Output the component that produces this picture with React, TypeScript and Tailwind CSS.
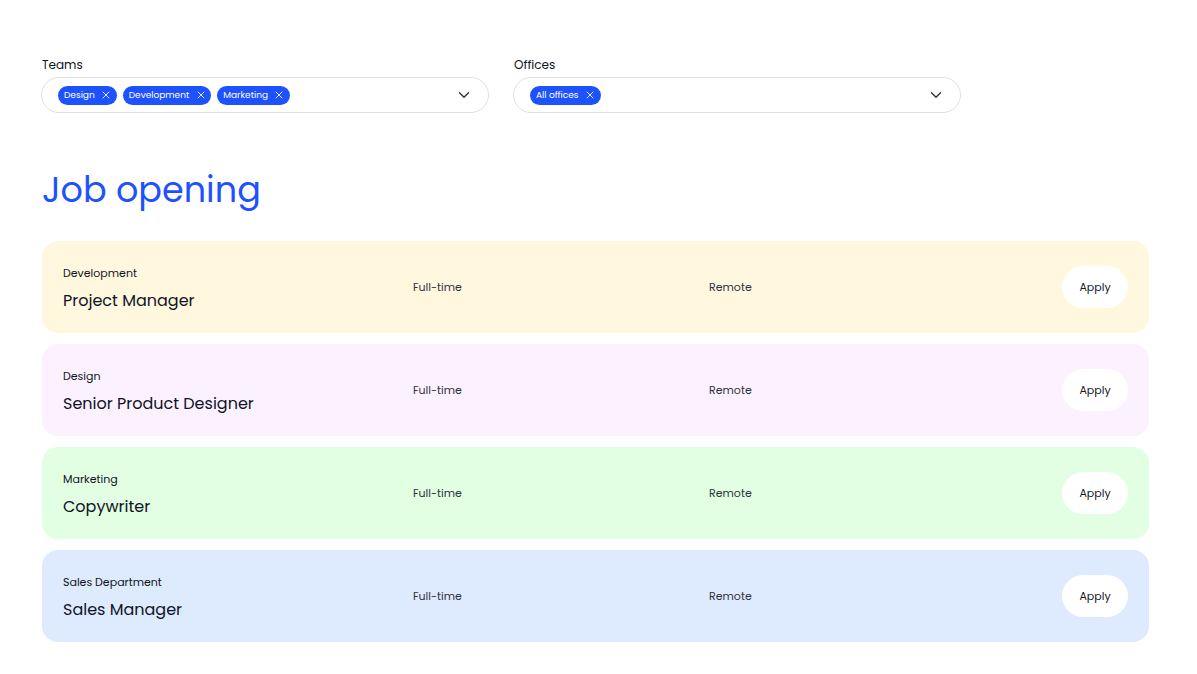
import { useState } from "react";
import { ChevronDown, X } from "lucide-react";

type FilterProps = {
  id: string;
  label: string;
  options: string[];
  initial: string[];
};

function Filter({ id, label, options, initial }: FilterProps) {
  const [selected, setSelected] = useState(initial);
  const remaining = options.filter((option) => !selected.includes(option));

  return (
    <div className="flex min-w-0 flex-col gap-[3px]">
      <label htmlFor={id} className="text-[12px] leading-[18px]">
        {label}
      </label>
      <div className="-ml-px flex min-h-9 items-center gap-1.5 rounded-full border border-[#dfe0e3] bg-white pr-[15px] pl-4">
        {selected.map((item) => (
          <span
            key={item}
            className="flex h-[19px] shrink-0 items-center gap-[7px] rounded-full bg-[#1f52ff] px-1.5 text-[9px] leading-4 text-white"
          >
            {item}
            <button
              type="button"
              aria-label={`Remove ${item}`}
              onClick={() => setSelected(selected.filter((name) => name !== item))}
              className="flex size-[9px] cursor-pointer items-center justify-center"
            >
              <X className="size-[12px] shrink-0" strokeWidth={1.7} />
            </button>
          </span>
        ))}
        <div className="grid min-w-4 flex-1 items-center">
          <select
            id={id}
            value=""
            onChange={(event) => setSelected([...selected, event.target.value])}
            className="col-start-1 row-start-1 h-6 w-full cursor-pointer appearance-none bg-transparent text-[12px]"
          >
            <option value="" />
            {remaining.map((option) => (
              <option key={option} value={option}>
                {option}
              </option>
            ))}
          </select>
          <ChevronDown
            className="pointer-events-none col-start-1 row-start-1 size-[18px] justify-self-end text-[#30333f]"
            strokeWidth={1.8}
          />
        </div>
      </div>
    </div>
  );
}

const jobs = [
  { team: "Development", title: "Project Manager", color: "bg-[#fff8df]" },
  { team: "Design", title: "Senior Product Designer", color: "bg-[#fbf1ff]" },
  { team: "Marketing", title: "Copywriter", color: "bg-[#e2fee3]" },
  { team: "Sales Department", title: "Sales Manager", color: "bg-[#deebfe]" },
];

export default function App() {
  return (
    <main className="min-h-screen bg-white pt-14 pr-12 pb-8 pl-[42px] font-['Poppins','Inter',sans-serif] text-[#101426]">
      <div className="grid max-w-[919px] grid-cols-2 gap-[25px]">
        <Filter
          id="teams"
          label="Teams"
          options={["Design", "Development", "Marketing", "Sales Department"]}
          initial={["Design", "Development", "Marketing"]}
        />
        <Filter id="offices" label="Offices" options={["All offices", "Remote"]} initial={["All offices"]} />
      </div>

      <h1 className="mt-[53px] text-[35px] leading-[48px] font-normal text-[#1f52ff]">Job opening</h1>

      <ul className="mt-[27px] flex flex-col gap-[11px]">
        {jobs.map((job) => (
          <li
            key={job.title}
            className={`grid min-h-[92px] grid-cols-[350fr_296fr_419fr] items-center rounded-2xl px-[21px] ${job.color}`}
          >
            <div className="pt-1">
              <p className="text-[11px] leading-5">{job.team}</p>
              <h2 className="mt-1 text-[16px] leading-7">{job.title}</h2>
            </div>
            <p className="text-[11px] leading-5 text-[#30333f]">Full-time</p>
            <div className="flex items-center justify-between">
              <p className="text-[11px] leading-5 text-[#30333f]">Remote</p>
              <button
                type="button"
                className="h-[42px] w-[66px] cursor-pointer rounded-full bg-white text-[11px] leading-5"
              >
                Apply
              </button>
            </div>
          </li>
        ))}
      </ul>
    </main>
  );
}
